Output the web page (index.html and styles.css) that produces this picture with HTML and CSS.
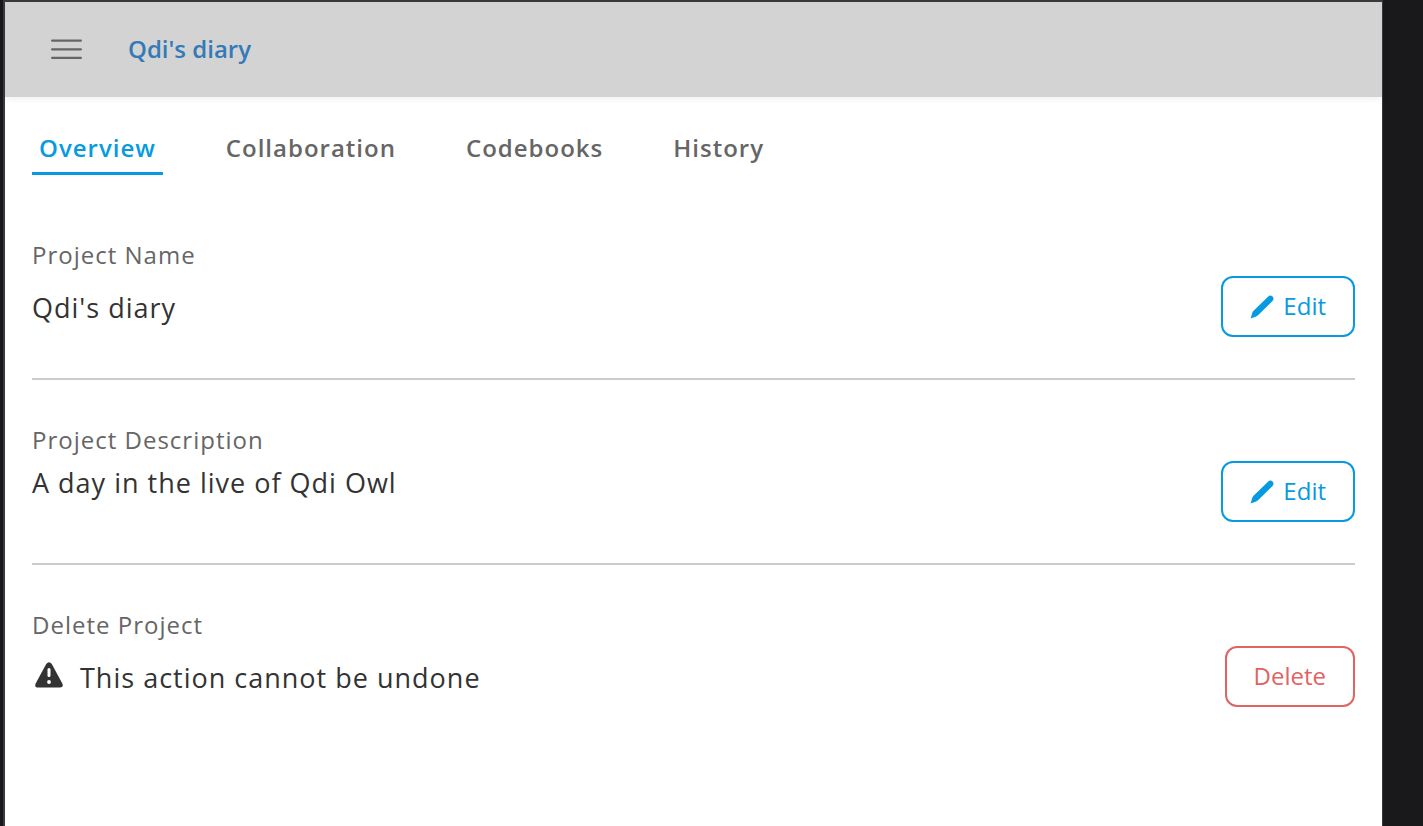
FILE: index.html
```html
<!DOCTYPE html>
<html lang="en">
<head>
<meta charset="utf-8">
<meta name="viewport" content="width=device-width, initial-scale=1">
<title>Qdi's diary</title>
<link rel="stylesheet" href="styles.css">
</head>
<body>
<div class="window">
  <header class="topbar">
    <button class="menu-button" type="button" aria-label="Menu">
      <svg class="menu-icon" viewBox="0 0 32 22" aria-hidden="true"><path d="M1.2 2.4H30.8M1.2 11.4H30.8M1.2 20.2H30.8" fill="none" stroke="#666" stroke-width="2.4" stroke-linecap="round"/></svg>
    </button>
    <a class="project-link" href="#">Qdi's diary</a>
  </header>
  <main class="content">
    <nav class="tabs">
      <a class="tab tab-active" href="#" aria-current="page">Overview</a>
      <a class="tab" href="#">Collaboration</a>
      <a class="tab" href="#">Codebooks</a>
      <a class="tab" href="#">History</a>
    </nav>
    <section class="setting">
      <div class="setting-text">
        <h2 class="label">Project Name</h2>
        <p class="value value-spaced">Qdi's diary</p>
      </div>
      <button class="button" type="button">
        <svg class="pencil" viewBox="0 0 24 24" aria-hidden="true"><path d="M0.6 23.5 2.4 17.6Q2.8 16.5 3.8 15.5L18 1.7Q20.300 -.5 22.600 1.500Q24.600 3.900 22.300 6.200L8.300 20Q7.300 21 6.200 21.400Z" fill="currentColor"/></svg>
        Edit
      </button>
    </section>
    <section class="setting">
      <div class="setting-text">
        <h2 class="label">Project Description</h2>
        <p class="value">A day in the live of Qdi Owl</p>
      </div>
      <button class="button" type="button">
        <svg class="pencil" viewBox="0 0 24 24" aria-hidden="true"><path d="M0.6 23.5 2.4 17.6Q2.8 16.5 3.8 15.5L18 1.7Q20.300 -.5 22.600 1.500Q24.600 3.900 22.300 6.200L8.300 20Q7.300 21 6.200 21.400Z" fill="currentColor"/></svg>
        Edit
      </button>
    </section>
    <section class="setting">
      <div class="setting-text">
        <h2 class="label">Delete Project</h2>
        <p class="value value-spaced warning">
          <svg class="warning-icon" viewBox="0 0 28 26" aria-hidden="true"><path d="M11.200 2Q14-1.500 16.800 2L27.200 21.200Q29 25.500 25 25.600H3Q-1 25.500.800 21.200Z" fill="#333"/><path d="M14 7.600V13.400" stroke="#fff" stroke-width="3" stroke-linecap="round"/><circle cx="14" cy="20" r="1.900" fill="#fff"/></svg>
          This action cannot be undone
        </p>
      </div>
      <button class="button button-danger" type="button">Delete</button>
    </section>
  </main>
</div>
</body>
</html>
```

FILE: styles.css
```css
* {
  box-sizing: border-box;
}

body {
  margin: 0;
  min-height: 100vh;
  display: flex;
  padding: 0 40px 0 3px;
  background: #19191b;
  font-family: "Open Sans", "Noto Sans", sans-serif;
  color: #333;
}

.window {
  flex: 1;
  background: #fff;
  border: solid #3b393e;
  border-width: 2px 1px 0 2px;
}

.topbar {
  display: flex;
  align-items: center;
  gap: 46px;
  padding: 30px 46px 32px;
  background: #d3d3d3;
  box-shadow: 0 1px 8px rgba(0, 0, 0, 0.08);
}

.menu-button {
  display: flex;
  padding: 0;
  border: 0;
  background: none;
}

.menu-icon {
  width: 31px;
  height: 22px;
}

.project-link {
  color: #337ab7;
  font-size: 24px;
  font-weight: 600;
  line-height: 33px;
  text-decoration: none;
}

.content {
  padding: 34px 27px;
}

.tabs {
  display: flex;
  gap: 56px;
  margin-bottom: 20px;
}

.tab {
  padding: 0 7px 8px;
  border-bottom: 3px solid transparent;
  color: #666;
  font-size: 24px;
  font-weight: 600;
  line-height: 33px;
  letter-spacing: 1px;
  text-decoration: none;
}

.tab-active {
  border-color: #069ae0;
  color: #069ae0;
}

.setting {
  display: flex;
  align-items: flex-end;
  justify-content: space-between;
  gap: 24px;
  padding: 43px 0 41px;
  border-bottom: 2px solid #ccc;
}

.setting:last-child {
  border-bottom: 0;
}

.setting-text {
  align-self: flex-start;
}

.label {
  margin: 0;
  color: #666;
  font-size: 24px;
  font-weight: 400;
  line-height: 33px;
  letter-spacing: 1px;
}

.value {
  margin: 0;
  padding: 6px 0 18px;
  font-size: 27px;
  line-height: 42px;
  letter-spacing: 1px;
}

.value-spaced {
  padding: 16px 0 8px;
}

.warning {
  display: flex;
  gap: 17px;
}

.warning-icon {
  width: 28px;
  height: 26px;
  margin: 5px 0 0 3px;
}

.button {
  display: flex;
  align-items: center;
  gap: 9px;
  padding: 11px 27px 13px;
  border: 2px solid #069ae0;
  border-radius: 12px;
  background: #fff;
  color: #069ae0;
  font-family: inherit;
  font-size: 24px;
  line-height: 33px;
}

.button-danger {
  border-color: #df6464;
  color: #df6464;
}

.pencil {
  width: 24px;
  height: 24px;
  margin-top: 2px;
}
```
